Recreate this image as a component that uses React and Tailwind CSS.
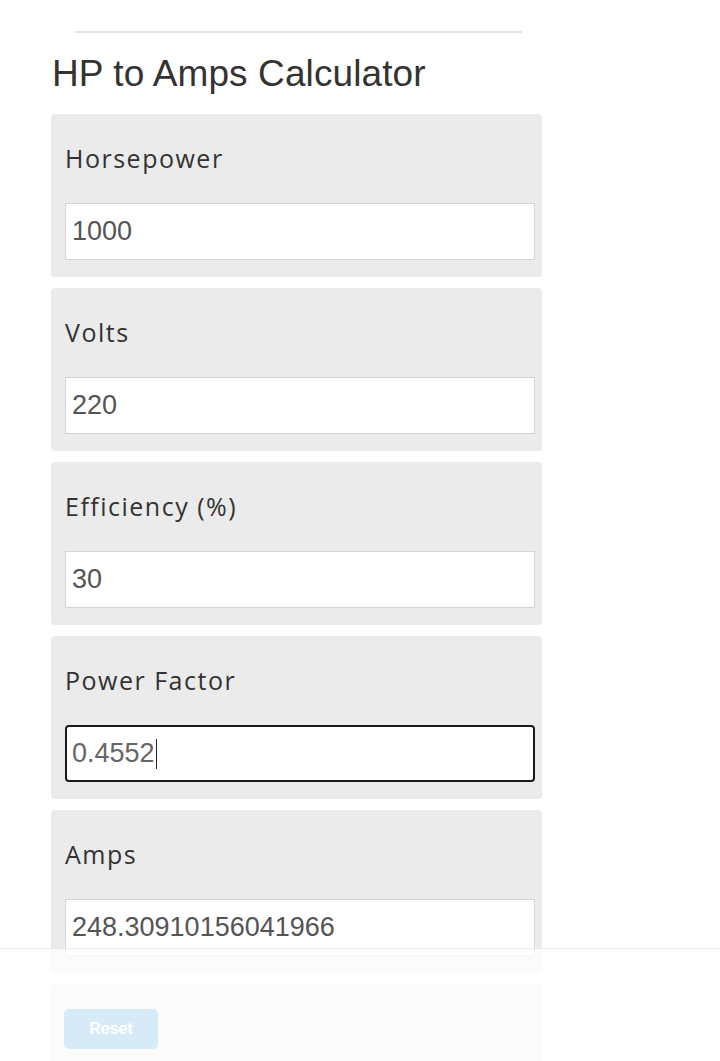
import React from 'react';

const fields = [
    { label: 'Horsepower', value: '1000' },
    { label: 'Volts', value: '220' },
    { label: 'Efficiency (%)', value: '30' },
    { label: 'Power Factor', value: '0.4552', focused: true },
    { label: 'Amps', value: '248.30910156041966' },
];

const Field = ({ label, value, focused }) => (
    <div className="h-[163px] rounded-[4px] bg-[#ebebeb] pl-[14px] pr-[7px] pt-[29px]">
        <div className="font-['Open_Sans',sans-serif] text-[25px] leading-[30px] tracking-[1.5px] text-[#333]">
            {label}
        </div>
        {focused ? (
            <div className="mt-[30px] flex h-[57px] items-center rounded-[4px] border-2 border-[#1a1a1a] bg-white pl-[5px] font-['Liberation_Sans',Arial,sans-serif] text-[27px] text-[#666]">
                {value}
                <span className="ml-[1px] h-[30px] w-[1px] bg-[#222]" />
            </div>
        ) : (
            <div className="mt-[30px] flex h-[57px] items-center border border-[#d4d4d4] bg-white pl-[6px] font-['Liberation_Sans',Arial,sans-serif] text-[27px] text-[#555]">
                {value}
            </div>
        )}
    </div>
);

export default function App() {
    return (
        <div className="relative min-h-screen overflow-hidden bg-white">
            <div className="w-[542px] pl-[51px]">
                {/* top rule */}
                <div className="ml-[24px] mt-[31px] h-[2px] w-[447px] bg-[#e6e6e6]" />

                <h1 className="ml-[1px] mt-[20px] font-['Liberation_Sans',Arial,sans-serif] text-[37px] leading-[42px] tracking-[0.1px] text-[#333]">
                    HP to Amps Calculator
                </h1>

                <div className="mt-[19px] flex flex-col gap-[11px]">
                    {fields.map((f) => (
                        <Field key={f.label} {...f} />
                    ))}
                    <div className="h-[100px] rounded-[4px] bg-[#ebebeb] px-[13px] pt-[25px]">
                        <button className="h-[40px] w-[94px] rounded-[5px] bg-[#3498db] font-['Liberation_Sans',Arial,sans-serif] text-[16px] font-bold text-white">
                            Reset
                        </button>
                    </div>
                </div>
            </div>

            {/* faded overlay over the lower part */}
            <div className="absolute inset-x-0 bottom-0 top-[948px] border-t border-[#e8e8e8] bg-white/80" />
        </div>
    );
}
